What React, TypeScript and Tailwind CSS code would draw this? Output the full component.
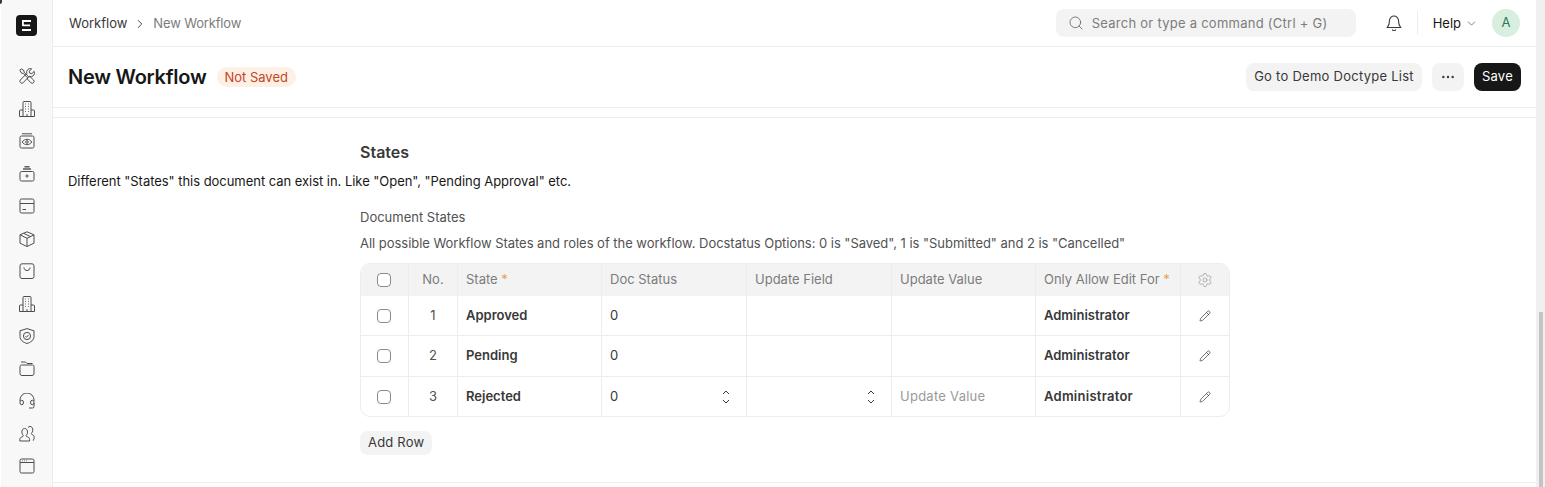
import { ChevronDown, ChevronRight, Ellipsis, Pencil, Search, Settings } from "lucide-react";
import type { ReactNode } from "react";

const ICON = "w-4 h-4 text-[#4d4d4d]";

function Svg({ children }: { children: ReactNode }) {
  return (
    <svg viewBox="0 0 16 16" fill="none" stroke="currentColor" strokeWidth="1" className={ICON}>
      {children}
    </svg>
  );
}

const Building = () => (
  <Svg>
    <path d="M4 15.500V1.500a1 1 0 0 1 1-1h6a1 1 0 0 1 1 1v14M4 9H1.500a1 1 0 0 0-1 1v5.500h15V10a1 1 0 0 0-1-1H12" />
    <path d="M6.200 3h.8M9 3h.8M6.200 5.500h.8M9 5.500h.8M6.200 8h.8M9 8h.8M6.200 10.500h.8M9 10.500h.8M8 13v2.500" />
  </Svg>
);

const sidebarIcons: ReactNode[] = [
  <Svg key="tools">
    <path d="M.8 2.200l1.400-1.400 2.800 1.800v1.500l4.700 4.700h1.500l3.300 3.200a1.900 1.900 0 0 1-2.700 2.700L8.600 11.300V9.800L4.200 5.300H2.700z" />
    <path d="M15.200 3.400l-2.400 2.300-2-.5-.5-2 2.300-2.400a3.700 3.700 0 0 0-4.800 4.700L1.300 12a2 2 0 0 0 2.800 2.800l6.100-6.500a3.700 3.700 0 0 0 5-4.900z" />
  </Svg>,
  <Building key="b1" />,
  <Svg key="eye">
    <path d="M3 .8h10M2.500 3h11A1.500 1.500 0 0 1 15 4.500v9a1.500 1.500 0 0 1-1.500 1.500h-11A1.500 1.500 0 0 1 1 13.500v-9A1.500 1.500 0 0 1 2.500 3z" />
    <path d="M3.200 9c1.200-1.800 2.900-2.700 4.800-2.700s3.600.9 4.800 2.700c-1.200 1.800-2.900 2.700-4.800 2.700S4.400 10.800 3.200 9z" />
    <circle cx="8" cy="9" r="1.300" />
  </Svg>,
  <Svg key="archive">
    <path d="M5.500 .8h5" strokeWidth="1.400" />
    <path d="M4 3h8" strokeWidth="1.400" />
    <path d="M2.500 5.500h11A1.500 1.500 0 0 1 15 7v6.500a1.500 1.500 0 0 1-1.500 1.500h-11A1.500 1.500 0 0 1 1 13.500V7a1.500 1.500 0 0 1 1.500-1.500z" />
    <circle cx="8" cy="10" r="1.100" />
  </Svg>,
  <Svg key="card">
    <rect x="1" y="1" width="14" height="14" rx="1.500" />
    <path d="M1 5.500h14M3.500 11.500h3.500" />
  </Svg>,
  <Svg key="box">
    <path d="M8 .8l7 3v8.400l-7 3.300-7-3.300V3.800zM1 3.800l7 3.500 7-3.500M8 7.300v8.200M4.500 2.300l7 3.300" />
  </Svg>,
  <Svg key="bag">
    <rect x="1" y=".8" width="14" height="14.700" rx="2" />
    <path d="M5 4.500c0 4 6 4 6 0" />
  </Svg>,
  <Building key="b2" />,
  <Svg key="shield">
    <path d="M8 .6l7 2.200v5.700c0 3.500-3.200 5.900-7 7-3.800-1.100-7-3.500-7-7V2.800z" />
    <circle cx="8" cy="8" r="3.600" />
    <path d="M6.500 8.300l1 1 2-2.300" />
  </Svg>,
  <Svg key="folder">
    <path d="M2 1h4.500L8 2.500h5.500M2.500 4h11A1.500 1.500 0 0 1 15 5.500v7a2 2 0 0 1-2 2H3a2 2 0 0 1-2-2v-7A1.500 1.500 0 0 1 2.500 4z" />
  </Svg>,
  <Svg key="headset">
    <path d="M1 8V7a7 7 0 0 1 14 0v1" />
    <path d="M1 9a1.700 1.700 0 0 1 3.400 0v1A1.700 1.700 0 0 1 1 10zM11.600 9a1.700 1.700 0 0 1 3.400 0v1a1.700 1.700 0 0 1-3.400 0zM15 10v3.500a1.500 1.500 0 0 1-1.500 1.500H10" />
  </Svg>,
  <Svg key="users">
    <path d="M.8 15v-1.500c0-2 1.500-2.500 3-3 .7-.3.5-1.300 0-1.800-1.500-1.500-1.300-6.200 1.900-6.200s3.400 4.700 1.900 6.200c-.5.500-.7 1.500 0 1.800 1.500.5 3 1 3 3V15z" />
    <path d="M9 1.500c.5-.6 1.100-1 2-1 3.200 0 3.400 4.700 1.900 6.200-.5.500-.7 1.500 0 1.800 1.300.5 2.300 1 2.300 2.700 0 1-.3 2.300-1 3.500" />
  </Svg>,
  <Svg key="window">
    <rect x="1" y="1" width="14" height="14" rx="1.500" />
    <path d="M1 4.500h14M3 2.800h.7M5 2.800h.7M7 2.800h.7" />
  </Svg>,
];

const rows = [
  { no: 1, state: "Approved", h: "h-[40px] border-b border-[#ededed]" },
  { no: 2, state: "Pending", h: "h-[41px] border-b border-[#ededed]" },
  { no: 3, state: "Rejected", h: "h-[39px]", editing: true },
];

const COLS = "grid grid-cols-[48px_49px_144px_145px_145px_144px_145px_1fr]";
const CELL = "flex items-center px-2 border-r border-[#ededed]";

function Check() {
  return <span className="w-[14px] h-[14px] rounded-[4px] border border-[#8a8a8a] bg-white" />;
}

// Select arrows, two small chevrons set far apart
function Stepper() {
  return (
    <svg viewBox="0 0 8 14" fill="none" stroke="currentColor" strokeWidth="1" className="w-2 h-[14px] text-[#383838]">
      <path d="M1 4l3-3 3 3M1 10l3 3 3-3" />
    </svg>
  );
}

export default function App() {
  return (
    <div className="relative flex h-[487px] overflow-hidden bg-white text-[13px] text-[#383838] font-['Inter',sans-serif]">
      <aside className="w-[53px] shrink-0 bg-[#f8f8f8] border-l border-l-white border-r border-r-[#ededed] flex flex-col items-center pt-[15px]">
        <div className="w-[21px] h-[21px] rounded-[4px] bg-[#171717] flex items-center justify-center text-white mb-[32px]">
          <svg viewBox="0 0 10 12" className="w-[9px] h-[11px]" fill="none" stroke="currentColor" strokeWidth="2">
            <path d="M0 1h10M1 0v6.500M1 5.800h8M0 11h10" />
          </svg>
        </div>
        <div className="flex flex-col gap-[16.500px]">
          {sidebarIcons}
        </div>
      </aside>

      {/* dark window corner at the very top left */}
      <div className="absolute top-0 left-0 w-[2px] h-[4px] rounded-br-[2px] bg-[#3a3a3a]" />

      <div className="flex-1 min-w-0 flex flex-col">
        <header className="h-[47px] shrink-0 border-b border-[#ededed] flex items-center pl-4 pr-[16px] pt-[1px]">
          <span className="text-[#383838]">Workflow</span>
          <ChevronRight className="w-[14px] h-[14px] mx-[6px] text-[#383838]" strokeWidth={1.600} />
          <span className="text-[#7c7c7c] tracking-[-0.012em]">New Workflow</span>
          <div className="ml-auto w-[300px] h-7 -mt-[1px] rounded-lg bg-[#f3f3f3] flex items-center px-3 gap-2 text-[#7c7c7c] tracking-[0.02em]">
            <Search className="w-[16px] h-[16px] text-[#6b6b6b]" strokeWidth={1.300} />
            <span className="mt-[1px]">Search or type a command (Ctrl + G)</span>
          </div>
          <svg viewBox="0 0 16 16" fill="none" stroke="currentColor" strokeWidth="1.100" className="w-4 h-4 ml-[30px] -mt-[1px] text-[#383838]">
            <path d="M8 1a4.500 4.500 0 0 0-4.500 4.500c0 4-1 5.500-2.200 7h13.400c-1.200-1.500-2.200-3-2.200-7A4.500 4.500 0 0 0 8 1zM6.300 14.500a1.800 1.800 0 0 0 3.400 0" />
          </svg>
          <div className="w-px h-6 -mt-[1px] bg-[#ededed] ml-[15px] mr-[15px]" />
          <span className="text-[#171717]">Help</span>
          <ChevronDown className="w-[13px] h-[13px] ml-[4px] text-[#525252]" strokeWidth={1.300} />
          <div className="w-7 h-7 -mt-[1px] rounded-full bg-[#d8efdf] ml-[14px] flex items-center justify-center text-[#2c7a5b]">A</div>
        </header>

        <div className="h-[61px] shrink-0 border-b border-[#ededed] flex items-center pl-[15px] pr-[15px]">
          <h1 className="text-[20px] font-semibold tracking-[-0.0125em] text-[#171717]">New Workflow</h1>
          <span className="ml-[11px] h-5 pl-[7px] pr-[8px] pt-[1px] rounded-full bg-[#fff0e6] text-[#c2461f] flex items-center">Not Saved</span>
          <button className="ml-auto h-7 px-2 rounded-lg bg-[#f3f3f3] text-[#383838] tracking-[0.02em]">Go to Demo Doctype List</button>
          <button className="ml-[10px] w-8 h-7 rounded-lg bg-[#f3f3f3] flex items-center justify-center">
            <Ellipsis className="w-4 h-4 text-[#383838]" strokeWidth={1.600} />
          </button>
          <button className="ml-[10px] h-7 px-2 rounded-lg bg-[#171717] text-white tracking-[0.02em]">Save</button>
        </div>

        <main className="mt-[9px] flex-1 min-h-0 border-t border-[#ededed]">
          <div className="h-[365px] border-b border-[#ededed]">
            <div className="pl-[307px] pt-[25px]">
              <h2 className="text-[16px] leading-[18px] font-semibold tracking-normal text-[#383838]">States</h2>
            </div>
            <p className="pl-[15px] mt-[11px] leading-[18px] text-[#171717] tracking-[-0.003em]">
              Different "States" this document can exist in. Like "Open", "Pending Approval" etc.
            </p>
            <div className="pl-[307px] w-[1177px] mt-[18px]">
              <div className="text-[#525252] leading-[18px]">Document States</div>
              <p className="mt-[8px] leading-[18px] text-[#525252] tracking-[-0.0025em]">
                All possible Workflow States and roles of the workflow. Docstatus Options: 0 is "Saved", 1 is "Submitted" and 2 is "Cancelled"
              </p>
              <div className="mt-[11px] rounded-[10px] border border-[#ededed] overflow-hidden">
                <div className={`${COLS} h-[32px] bg-[#f3f3f3] text-[#7c7c7c]`}>
                  <div className={`${CELL} justify-center pl-[7px] pr-[9px]`}><Check /></div>
                  <div className={`${CELL} justify-center`}>No.</div>
                  <div className={CELL}>State&nbsp;<span className="text-[#e8a15b]">*</span></div>
                  <div className={CELL}>Doc Status</div>
                  <div className={CELL}>Update Field</div>
                  <div className={CELL}>Update Value</div>
                  <div className={`${CELL} whitespace-nowrap`}>Only Allow Edit For&nbsp;<span className="text-[#e8a15b]">*</span></div>
                  <div className="flex items-center justify-center">
                    <Settings className="w-4 h-4 text-[#999999]" strokeWidth={1.100} />
                  </div>
                </div>
                {rows.map((r) => (
                  <div key={r.no} className={`${COLS} ${r.h}`}>
                    <div className={`${CELL} justify-center pl-[7px] pr-[9px]`}><Check /></div>
                    <div className={`${CELL} justify-center text-[#525252]`}>{r.no}</div>
                    <div className={`${CELL} font-semibold`}>{r.state}</div>
                    <div className={`${CELL} justify-between pr-[16px]`}>
                      0
                      {r.editing && <Stepper />}
                    </div>
                    <div className={`${CELL} justify-end pr-[16px]`}>
                      {r.editing && <Stepper />}
                    </div>
                    <div className={`${CELL} text-[#999999] tracking-[0.02em]`}>{r.editing ? "Update Value" : ""}</div>
                    <div className={`${CELL} font-semibold ${r.editing ? "tracking-[0.02em]" : ""}`}>Administrator</div>
                    <div className="flex items-center justify-center">
                      <Pencil className="w-3 h-3 text-[#383838]" strokeWidth={1.400} />
                    </div>
                  </div>
                ))}
              </div>
              <button className="mt-[14px] h-6 px-2 rounded-lg bg-[#f3f3f3] text-[#383838] tracking-[0.015em]">Add Row</button>
            </div>
          </div>
        </main>
      </div>

      <div className="w-[9px] shrink-0 bg-[#f0f0f0] pl-[3px] pr-[2px] pt-[312px]">
        <div className="h-full bg-[#c4c4c4]" />
      </div>
    </div>
  );
}
